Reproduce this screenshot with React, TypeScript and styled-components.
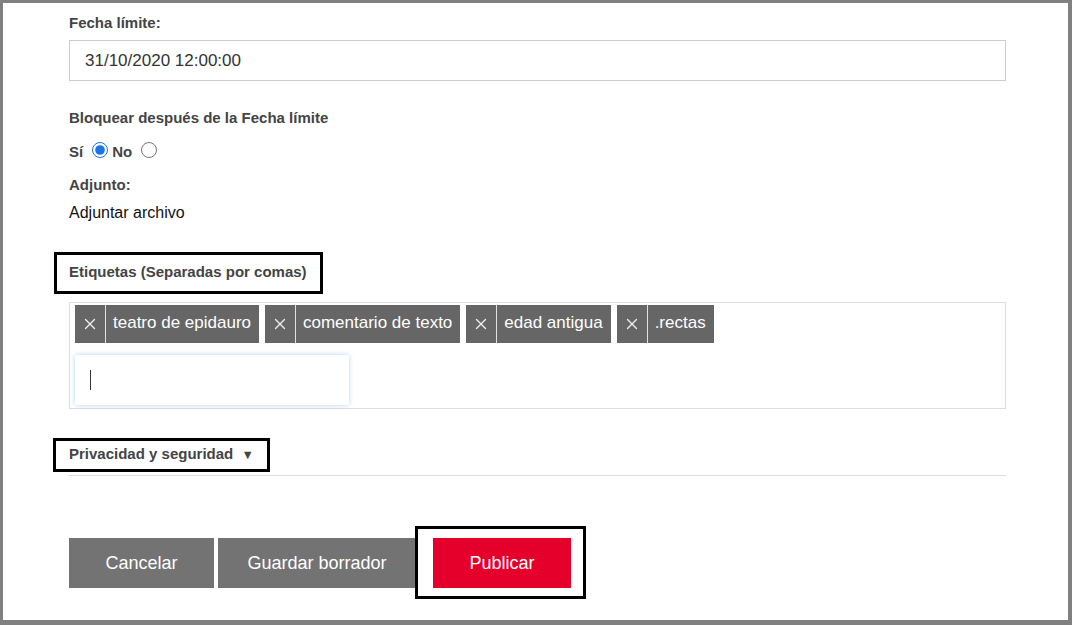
import React from 'react';
import styled, { createGlobalStyle } from 'styled-components';
import { X } from 'lucide-react';

const GlobalStyle = createGlobalStyle`
  body {
    margin: 0;
    font-family: "Liberation Sans", Arial, sans-serif;
    background: #fff;
  }
`;

const Frame = styled.div`
  box-sizing: border-box;
  height: 625px;
  border-style: solid;
  border-color: #808080;
  border-width: 3px 4px 5px 3px;
  padding: 10px 62px 0 66px;
  display: flex;
  flex-direction: column;
`;

const Label = styled.div<{ $top?: number }>`
  font-size: 15px;
  line-height: 20px;
  font-weight: bold;
  color: #444;
  margin-top: ${(p) => p.$top ?? 0}px;
  align-self: flex-start;
`;

const Annotated = styled.div<{ $inset: string }>`
  position: relative;
  &::after {
    content: '';
    position: absolute;
    inset: ${(p) => p.$inset};
    border: 3px solid #000;
    pointer-events: none;
  }
`;

const TextInput = styled.div`
  box-sizing: border-box;
  margin-top: 7px;
  height: 41px;
  border: 1px solid #ccc;
  padding: 0 15px;
  display: flex;
  align-items: center;
  font-size: 17px;
  color: #333;
`;

const RadioRow = styled.div`
  margin-top: 13px;
  display: flex;
  align-items: center;
  height: 20px;
  font-size: 15px;
  font-weight: bold;
  color: #444;
`;

const Radio = styled.input`
  width: 16px;
  height: 16px;
  margin: 0 4px 2px 9px;
  accent-color: #1a73e8;
`;

const PlainText = styled.div`
  margin-top: 8px;
  font-size: 16px;
  line-height: 20px;
  color: #111;
`;

const TagBox = styled.div`
  margin-top: 20px;
  border: 1px solid #ddd;
  padding: 2px 5px 3px;
  display: flex;
  flex-wrap: wrap;
  gap: 6px;
`;

const RowBreak = styled.div`
  flex-basis: 100%;
  height: 0;
  margin-top: -6px;
`;

const Tag = styled.div`
  display: flex;
  height: 38px;
  background: #666;
  color: #fff;
  font-size: 17px;
`;

const TagRemove = styled.span`
  width: 30px;
  display: flex;
  align-items: center;
  justify-content: center;
  border-right: 1px solid #e0e0e0;
  color: #eee;
`;

const TagText = styled.span`
  display: flex;
  align-items: center;
  padding: 0 8px 2px 7px;
`;

const TagInput = styled.div`
  width: 274px;
  height: 50px;
  box-sizing: border-box;
  background: #fff;
  box-shadow: 0 0 5px rgba(100, 160, 230, 0.45);
  display: flex;
  align-items: center;
  padding-left: 15px;
`;

const Caret = styled.span`
  width: 1px;
  height: 20px;
  background: #333;
`;

const Divider = styled.div`
  margin-top: 35px;
  padding-bottom: 10px;
  border-bottom: 1px solid #ddd;
  display: flex;
`;

const ButtonRow = styled.div`
  margin-top: 62px;
  display: flex;
  gap: 4px;
`;

const Button = styled.button<{ $primary?: boolean; $width: number }>`
  width: ${(p) => p.$width}px;
  height: 50px;
  border: none;
  background: ${(p) => (p.$primary ? '#e4002b' : '#737373')};
  color: #fff;
  font-family: "Liberation Sans", Arial, sans-serif;
  font-size: 18px;
  padding: 0;
`;

const PublishWrap = styled(Annotated)`
  margin-left: 13px;
`;

const tags = ['teatro de epidauro', 'comentario de texto', 'edad antigua', '.rectas'];

export default function App() {
  return (
    <>
      <GlobalStyle />
      <Frame>
        <Label>Fecha límite:</Label>
        <TextInput>31/10/2020 12:00:00</TextInput>
        <Label $top={27}>Bloquear después de la Fecha límite</Label>
        <RadioRow>
          Sí <Radio type="radio" name="lock" defaultChecked /> No <Radio type="radio" name="lock" />
        </RadioRow>
        <Label $top={14}>Adjunto:</Label>
        <PlainText>Adjuntar archivo</PlainText>
        <Label $top={39}>
          <Annotated $inset="-10px -16px -12px -15px">Etiquetas (Separadas por comas)</Annotated>
        </Label>
        <TagBox>
          {tags.map((t) => (
            <Tag key={t}>
              <TagRemove>
                <X size={18} strokeWidth={1.8} />
              </TagRemove>
              <TagText>{t}</TagText>
            </Tag>
          ))}
          <RowBreak />
          <TagInput>
            <Caret />
          </TagInput>
        </TagBox>
        <Divider>
          <Label>
            <Annotated $inset="-6px -16px -7px -16px">Privacidad y seguridad&nbsp;&nbsp;<small>▼</small></Annotated>
          </Label>
        </Divider>
        <ButtonRow>
          <Button $width={145}>Cancelar</Button>
          <Button $width={198}>Guardar borrador</Button>
          <PublishWrap $inset="-12px -15px -11px -18px">
            <Button $primary $width={138}>Publicar</Button>
          </PublishWrap>
        </ButtonRow>
      </Frame>
    </>
  );
}
